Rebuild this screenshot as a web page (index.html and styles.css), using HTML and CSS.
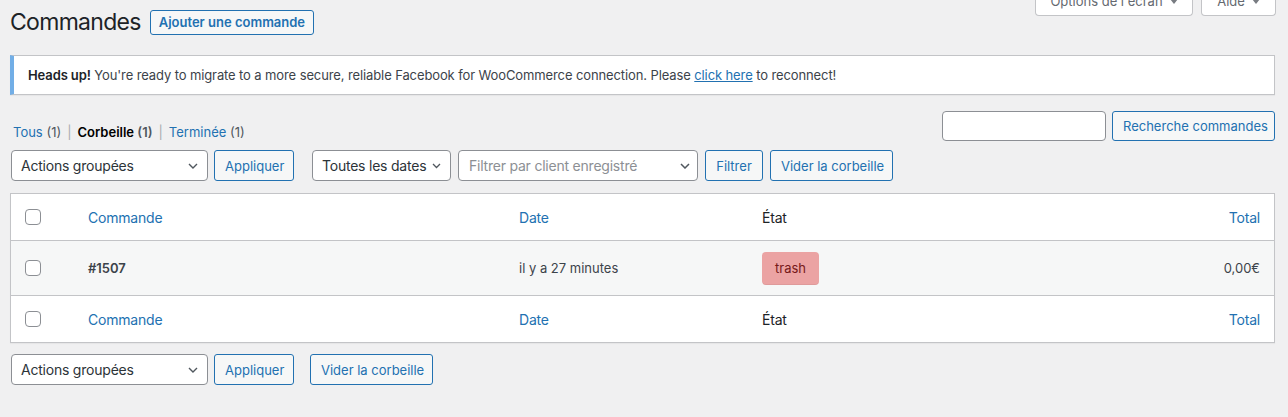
FILE: index.html
```html
<!DOCTYPE html>
<html lang="fr">
<head>
<meta charset="utf-8">
<title>Commandes</title>
<link rel="stylesheet" href="styles.css">
</head>
<body>
<div class="wrap">
  <div class="topbar">
    <div class="title">
      <h1>Commandes</h1>
      <a class="page-title-action" href="#">Ajouter une commande</a>
    </div>
    <div class="screen-links">
      <button class="tab tab-options">Options de l'écran <svg class="caret" width="8" height="5" viewBox="0 0 8 5"><path d="M0 0h8L4 5z" fill="#787c82"/></svg></button>
      <button class="tab tab-help">Aide <svg class="caret" width="8" height="5" viewBox="0 0 8 5"><path d="M0 0h8L4 5z" fill="#787c82"/></svg></button>
    </div>
  </div>

  <div class="notice">
    <p><strong>Heads up!</strong> You're ready to migrate to a more secure, reliable Facebook for WooCommerce connection. Please <a href="#">click here</a> to reconnect!</p>
  </div>

  <div class="filter-row">
    <ul class="subsubsub">
      <li><a href="#">Tous <span class="count">(1)</span></a><span class="sep">|</span></li>
      <li><a class="current" href="#">Corbeille <span class="count">(1)</span></a><span class="sep">|</span></li>
      <li><a href="#">Terminée <span class="count">(1)</span></a></li>
    </ul>
    <div class="search-box">
      <div class="search-input"></div>
      <button class="btn">Recherche commandes</button>
    </div>
  </div>

  <div class="tablenav tablenav-top">
    <div class="group">
      <div class="select sel-bulk"><span>Actions groupées</span><svg class="chev" width="10" height="6" viewBox="0 0 10 6"><path d="M1 1l4 4 4-4" fill="none" stroke="#50575e" stroke-width="1.4"/></svg></div>
      <button class="btn btn-apply">Appliquer</button>
    </div>
    <div class="group group-filters">
      <div class="select sel-date"><span>Toutes les dates</span><svg class="chev" width="9" height="6" viewBox="0 0 9 6"><path d="M1 1l3.5 3.5L8 1" fill="none" stroke="#50575e" stroke-width="1.3"/></svg></div>
      <div class="select sel-client"><span class="placeholder">Filtrer par client enregistré</span><svg class="chev" width="10" height="6" viewBox="0 0 10 6"><path d="M1 1l4 4 4-4" fill="none" stroke="#50575e" stroke-width="1.5"/></svg></div>
      <button class="btn btn-filter">Filtrer</button>
      <button class="btn btn-empty">Vider la corbeille</button>
    </div>
  </div>

  <table class="orders">
    <colgroup>
      <col class="c-check"><col class="c-order"><col class="c-date"><col class="c-status"><col class="c-total">
    </colgroup>
    <thead>
      <tr>
        <td class="check"><span class="cb"></span></td>
        <th><a href="#">Commande</a></th>
        <th><a href="#">Date</a></th>
        <th class="plain">État</th>
        <th class="total"><a href="#">Total</a></th>
      </tr>
    </thead>
    <tbody>
      <tr>
        <td class="check"><span class="cb"></span></td>
        <td><strong class="order-num">#1507</strong></td>
        <td>il y a 27 minutes</td>
        <td><mark class="status status-trash"><span>trash</span></mark></td>
        <td class="total">0,00€</td>
      </tr>
    </tbody>
    <tfoot>
      <tr>
        <td class="check"><span class="cb"></span></td>
        <th><a href="#">Commande</a></th>
        <th><a href="#">Date</a></th>
        <th class="plain">État</th>
        <th class="total"><a href="#">Total</a></th>
      </tr>
    </tfoot>
  </table>

  <div class="tablenav tablenav-bottom">
    <div class="group">
      <div class="select sel-bulk"><span>Actions groupées</span><svg class="chev" width="10" height="6" viewBox="0 0 10 6"><path d="M1 1l4 4 4-4" fill="none" stroke="#50575e" stroke-width="1.4"/></svg></div>
      <button class="btn btn-apply">Appliquer</button>
    </div>
    <div class="group group-bottom">
      <button class="btn btn-empty">Vider la corbeille</button>
    </div>
  </div>
</div>
</body>
</html>
```

FILE: styles.css
```css
* { box-sizing: border-box; }

body {
  margin: 0;
  background: #f0f0f1;
  font-family: Inter, "Noto Sans", sans-serif;
  font-size: 13px;
  color: #3c434a;
}

a { color: #2271b1; text-decoration: none; }

.wrap { padding: 0 13px 0 10px; }

/* top bar */
.topbar {
  display: flex;
  justify-content: space-between;
  align-items: flex-start;
}
.title {
  display: flex;
  align-items: center;
  gap: 9px;
  padding: 7px 0 4px;
}
.title h1 {
  margin: 0;
  font-size: 23px;
  font-weight: 400;
  line-height: 30px;
  letter-spacing: -0.7px;
  color: #1d2327;
}
.page-title-action {
  display: inline-block;
  height: 25px;
  line-height: 23px;
  padding: 0 8px;
  border: 1px solid #2271b1;
  border-radius: 3px;
  background: #f6f7f7;
  font-size: 13px;
  font-weight: 600;
  color: #2271b1;
}

.screen-links {
  display: flex;
  gap: 8px;
  margin-top: -8px;
  margin-right: -1px;
}
.tab {
  display: flex;
  align-items: center;
  justify-content: center;
  gap: 7px;
  height: 24px;
  padding: 0 10px 5px;
  border: 1px solid #c3c4c7;
  border-top: none;
  border-radius: 0 0 4px 4px;
  background: #fff;
  font-family: inherit;
  font-size: 13px;
  line-height: 16px;
  color: #646970;
  white-space: nowrap;
}
.tab-options { width: 158px; }
.tab-help { width: 75px; }
.caret { display: block; flex: none; }

/* notice */
.notice {
  margin-top: 14px;
  background: #fff;
  border: 1px solid #c3c4c7;
  border-left: 4px solid #72aee6;
  box-shadow: 0 1px 1px rgba(0,0,0,.04);
  padding: 9px 12px 9px 14px;
}
.notice p {
  margin: 0;
  line-height: 20px;
  font-size: 13px;
  letter-spacing: -0.11px;
  color: #3c434a;
}
.notice strong { color: #1d2327; font-weight: 600; }
.notice a { text-decoration: underline; }

/* filter row */
.filter-row {
  display: flex;
  justify-content: space-between;
  align-items: flex-start;
  margin-top: 16px;
}
.subsubsub {
  list-style: none;
  margin: 0;
  padding: 12px 0 0 3px;
  display: flex;
  line-height: 19px;
  font-size: 13px;
  color: #646970;
}
.subsubsub .count { color: #50575e; }
.subsubsub .current { color: #000; font-weight: 600; }
.subsubsub .sep { color: #a7aaad; padding: 0 6px; }

.search-box { display: flex; gap: 6px; }
.search-input {
  width: 164px;
  height: 30px;
  border: 1px solid #8c8f94;
  border-radius: 4px;
  background: #fff;
}

.btn {
  height: 30px;
  padding: 0 10px;
  border: 1px solid #2271b1;
  border-radius: 3px;
  background: #f6f7f7;
  color: #2271b1;
  font-family: inherit;
  font-size: 13px;
  line-height: 28px;
  white-space: nowrap;
}
.search-box .btn { width: 163px; }

/* tablenav */
.tablenav {
  display: flex;
  align-items: center;
  gap: 18px;
  padding-left: 1px;
}
.tablenav-top { margin-top: 8px; margin-bottom: 12px; }
.tablenav-bottom { margin-top: 11px; gap: 16px; }
.group { display: flex; gap: 6px; align-items: center; }
.group-filters { gap: 7px; }
.tablenav .btn { height: 31px; }
.btn-apply { width: 80px; }
.btn-filter { width: 58px; }
.btn-empty { width: 123px; }

.select {
  display: flex;
  align-items: center;
  justify-content: space-between;
  height: 31px;
  padding: 0 9px;
  border: 1px solid #8c8f94;
  border-radius: 4px;
  background: #fff;
  font-size: 14px;
  letter-spacing: -0.22px;
  color: #2c3338;
  white-space: nowrap;
}
.sel-bulk { width: 197px; }
.sel-date { width: 139px; }
.sel-client { width: 240px; padding-left: 10px; padding-right: 7px; }
.placeholder { color: #8c8f94; }
.chev { display: block; flex: none; }

/* table */
.orders {
  width: 100%;
  table-layout: fixed;
  border-collapse: separate;
  border-spacing: 0;
  background: #fff;
  border: 1px solid #c3c4c7;
  box-shadow: 0 1px 1px rgba(0,0,0,.04);
}
.c-check { width: 67px; }
.c-order { width: 431px; }
.c-date { width: 243px; }
.c-total { width: 150px; }

.orders th, .orders td {
  padding: 0 10px;
  text-align: left;
  vertical-align: middle;
  font-weight: 400;
}
.orders thead th, .orders thead td,
.orders tfoot th, .orders tfoot td {
  height: 47px;
  font-size: 14px;
  letter-spacing: -0.2px;
  color: #1d2327;
}
.orders thead th, .orders thead td { border-bottom: 1px solid #c3c4c7; }
.orders tfoot th, .orders tfoot td { border-top: 1px solid #c3c4c7; }
.orders tbody td {
  height: 54px;
  background: #f6f7f7;
  font-size: 13px;
  color: #3c434a;
}
.orders .check { padding: 0 0 0 14px; }
.orders .total { text-align: right; padding-right: 14px; }

.cb {
  display: block;
  width: 16px;
  height: 16px;
  border: 1px solid #8c8f94;
  border-radius: 4px;
  background: #fff;
}
.order-num { font-weight: 600; color: #3c434a; }

.status {
  display: inline-flex;
  height: 33px;
  align-items: center;
  border-radius: 4px;
  border-bottom: 1px solid rgba(0,0,0,.05);
  font-size: 13px;
}
.status span { margin: 0 13px; }
.status-trash { background: #eba3a3; color: #761919; }
```
